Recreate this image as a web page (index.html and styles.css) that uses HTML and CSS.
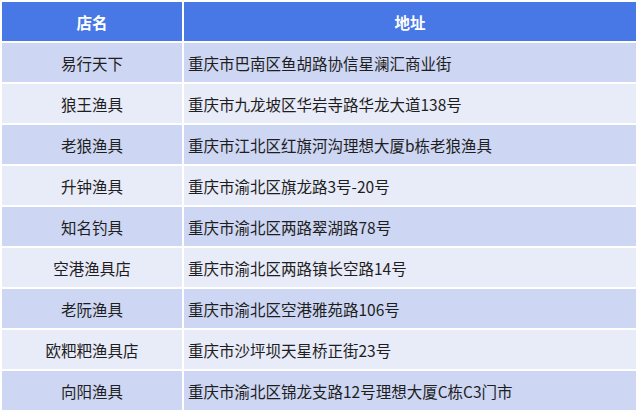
FILE: index.html
```html
<!DOCTYPE html>
<html lang="zh">
<head>
<meta charset="utf-8">
<link rel="stylesheet" href="styles.css">
</head>
<body>
<table class="shops">
  <thead>
    <tr><th class="col-name">店名</th><th>地址</th></tr>
  </thead>
  <tbody>
    <tr><td class="name">易行天下</td><td class="addr">重庆市巴南区鱼胡路协信星澜汇商业街</td></tr>
    <tr><td class="name">狼王渔具</td><td class="addr">重庆市九龙坡区华岩寺路华龙大道138号</td></tr>
    <tr><td class="name">老狼渔具</td><td class="addr">重庆市江北区红旗河沟理想大厦b栋老狼渔具</td></tr>
    <tr><td class="name">升钟渔具</td><td class="addr">重庆市渝北区旗龙路3号-20号</td></tr>
    <tr><td class="name">知名钓具</td><td class="addr">重庆市渝北区两路翠湖路78号</td></tr>
    <tr><td class="name">空港渔具店</td><td class="addr">重庆市渝北区两路镇长空路14号</td></tr>
    <tr><td class="name">老阮渔具</td><td class="addr">重庆市渝北区空港雅苑路106号</td></tr>
    <tr><td class="name">欧粑粑渔具店</td><td class="addr">重庆市沙坪坝天星桥正街23号</td></tr>
    <tr><td class="name">向阳渔具</td><td class="addr">重庆市渝北区锦龙支路12号理想大厦C栋C3门市</td></tr>
  </tbody>
</table>
</body>
</html>
```
FILE: styles.css
```css
html, body {
  margin: 0;
  padding: 0;
  background: #ffffff;
}
body {
  font-family: "Noto Sans CJK SC", "Liberation Sans", sans-serif;
  font-size: 15.5px;
  color: #1e1e1e;
}
.shops {
  border-collapse: collapse;
  width: 638px;
  table-layout: fixed;
}
.shops th,
.shops td {
  border: 2px solid #ffffff;
  height: 39px;
  padding: 0;
  box-sizing: content-box;
}
.shops th {
  background: #4778e6;
  color: #ffffff;
  font-weight: bold;
  text-align: center;
}
.col-name {
  width: 180px;
}
.shops tbody tr:nth-child(odd) td {
  background: #cdd6f2;
}
.shops tbody tr:nth-child(even) td {
  background: #e8ebf8;
}
.name {
  text-align: center;
}
.shops .addr {
  text-align: left;
  padding-left: 4px;
}
```
